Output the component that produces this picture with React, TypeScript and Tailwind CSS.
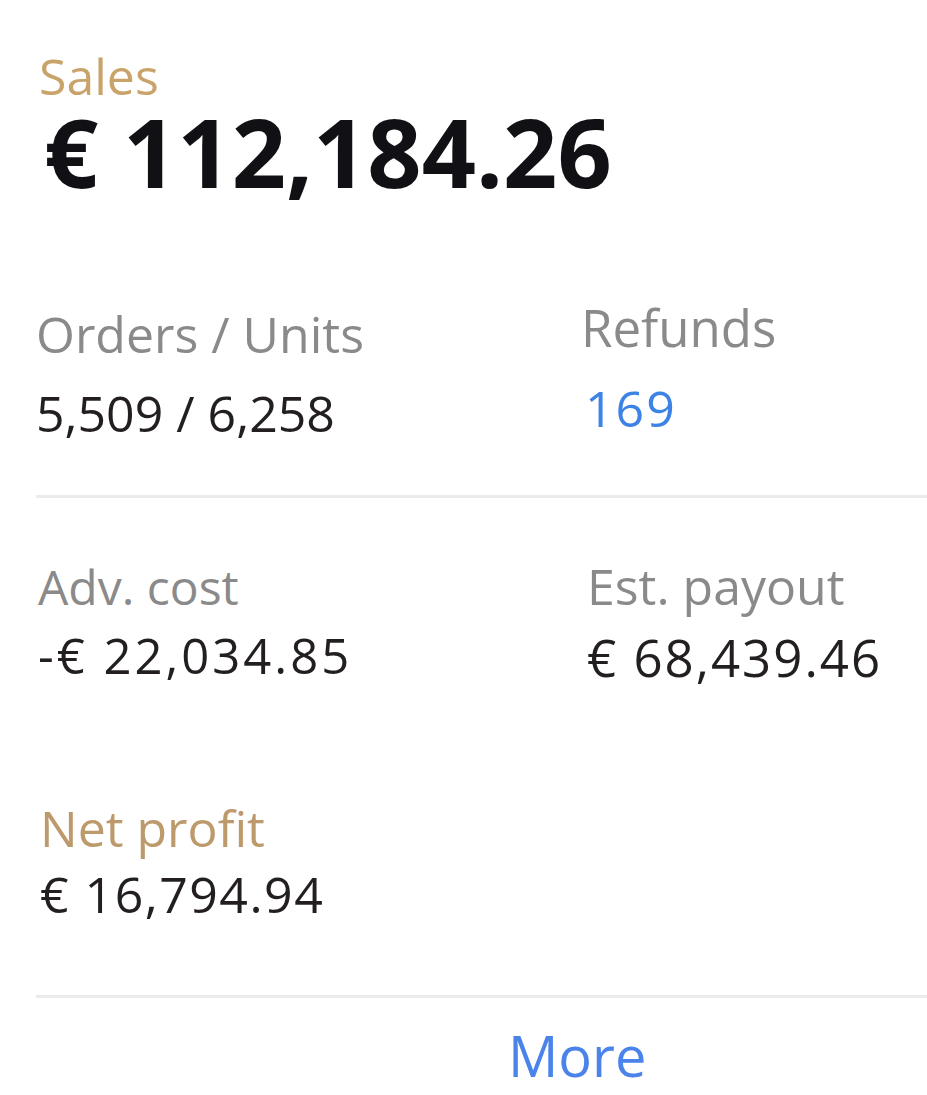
export default function App() {
  return (
    <div className="min-h-[1095px] w-full bg-white pl-[36px] text-[#231f20]" style={{ fontFamily: '"Open Sans", sans-serif' }}>
      <div className="pt-[51px] pl-[3px] text-[50px] leading-none text-[#c9a46a]">Sales</div>
      <div className="mt-[3px] pl-[8px] text-[95px] font-bold leading-none text-[#111014]">€ 112,184.26</div>

      <div className="mt-[103px] grid grid-cols-[545px_1fr]">
        <div className="pt-[7px]">
          <div className="text-[50px] leading-none text-[#8a8a8a]">Orders / Units</div>
          <div className="mt-[29px] text-[50px] leading-none">5,509 / 6,258</div>
        </div>
        <div>
          <div className="text-[51px] leading-none text-[#8a8a8a]">Refunds</div>
          <div className="mt-[30px] pl-[4px] text-[50px] leading-none tracking-[2px] text-[#3d83e6]">169</div>
        </div>
      </div>

      <div className="mt-[57px] h-[3px] bg-[#ebebeb]" />

      <div className="mt-[63px] grid grid-cols-[551px_1fr]">
        <div className="pt-[2px] pl-[2px]">
          <div className="text-[48px] leading-none text-[#8a8a8a]">Adv. cost</div>
          <div className="mt-[20px] text-[49px] leading-none tracking-[3px]">-€ 22,034.85</div>
        </div>
        <div>
          <div className="text-[50px] leading-none text-[#8a8a8a]">Est. payout</div>
          <div className="mt-[21px] text-[51px] leading-none tracking-[2px]">€ 68,439.46</div>
        </div>
      </div>

      <div className="mt-[120px] pl-[4px] text-[50px] leading-none text-[#bd9a6c]">Net profit</div>
      <div className="mt-[16px] pl-[4px] text-[50px] leading-none tracking-[1.5px]">€ 16,794.94</div>

      <div className="mt-[76px] h-[3px] bg-[#ebebeb]" />

      <div className="mt-[29px] pl-[472px] text-[56px] leading-none text-[#4a83ea]">More</div>
    </div>
  );
}
